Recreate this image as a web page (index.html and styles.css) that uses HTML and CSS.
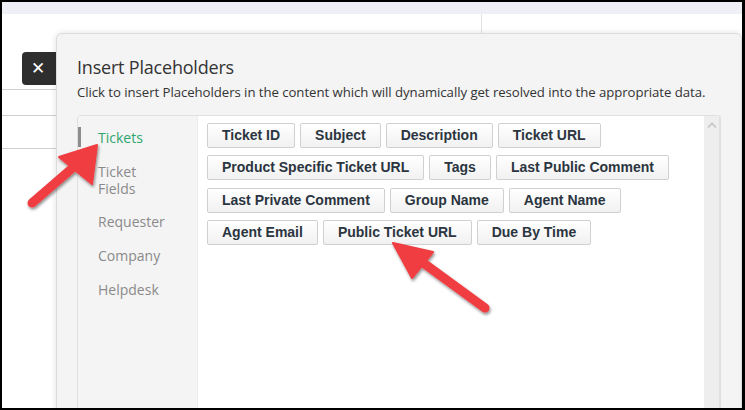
FILE: index.html
```html
<!DOCTYPE html>
<html>
<head>
<meta charset="utf-8">
<link rel="stylesheet" href="styles.css">
</head>
<body>
<div class="frame">
  <div class="app">
    <div class="topbar"></div>
    <div class="page"></div>
    <button class="close" aria-label="Close">&#x2715;</button>
    <div class="dialog">
      <h1 class="title">Insert Placeholders</h1>
      <p class="subtitle">Click to insert Placeholders in the content which will dynamically get resolved into the appropriate data.</p>
      <div class="panel">
        <ul class="side">
          <li class="side-item active">Tickets</li>
          <li class="side-item two-line">Ticket<br>Fields</li>
          <li class="side-item">Requester</li>
          <li class="side-item">Company</li>
          <li class="side-item">Helpdesk</li>
        </ul>
        <div class="content">
          <div class="chips">
            <span class="chip">Ticket ID</span>
            <span class="chip">Subject</span>
            <span class="chip">Description</span>
            <span class="chip">Ticket URL</span>
            <span class="chip">Product Specific Ticket URL</span>
            <span class="chip">Tags</span>
            <span class="chip">Last Public Comment</span>
            <span class="chip">Last Private Comment</span>
            <span class="chip">Group Name</span>
            <span class="chip">Agent Name</span>
            <span class="chip">Agent Email</span>
            <span class="chip">Public Ticket URL</span>
            <span class="chip">Due By Time</span>
          </div>
        </div>
        <div class="scrollbar">
          <svg class="chev" width="10" height="6" viewBox="0 0 10 6"><path d="M1 5.5 L5 1.5 L9 5.5" fill="none" stroke="#c4c4c4" stroke-width="1.6"/></svg>
        </div>
      </div>
    </div>
    <svg class="arrows" width="741" height="406" viewBox="0 0 741 406">
      <defs>
        <filter id="sh" x="-20%" y="-20%" width="140%" height="140%">
          <feDropShadow dx="1" dy="2" stdDeviation="1.6" flood-color="#000" flood-opacity="0.45"/>
        </filter>
      </defs>
      <g filter="url(#sh)" fill="#ef3e42" stroke="#ef3e42">
        <line x1="30" y1="201" x2="74" y2="163" stroke-width="9" stroke-linecap="round"/>
        <polygon points="95,143 90,182 57,155" stroke-width="2" stroke-linejoin="round"/>
        <line x1="483" y1="306" x2="420" y2="260" stroke-width="9" stroke-linecap="round"/>
        <polygon points="391,241 431,250 410,276" stroke-width="2" stroke-linejoin="round"/>
      </g>
    </svg>
  </div>
</div>
</body>
</html>
```

FILE: styles.css
```css
* { box-sizing: border-box; }
html, body { margin: 0; padding: 0; background: #000; }
.frame {
  width: 745px;
  height: 410px;
  background: #000;
  padding: 2px 3px 2px 2px;
}
.app {
  position: relative;
  width: 740px;
  height: 406px;
  background: #fff;
  overflow: hidden;
  font-family: "Open Sans", "Noto Sans", sans-serif;
}
.topbar {
  height: 12px;
  background: #eef0f5;
}
.page {
  height: 394px;
}
.page::after {
  content: "";
  display: block;
  width: 1px;
  height: 19px;
  background: #e3e3e3;
  margin-left: 479px;
}
.app::before {
  content: "";
  position: absolute;
  left: 0;
  top: 87px;
  width: 60px;
  height: 58px;
  border-top: 1px solid #d0d0d0;
  border-bottom: 1px solid #d0d0d0;
}
.app::after {
  content: "";
  position: absolute;
  left: 0;
  top: 113px;
  width: 60px;
  height: 1px;
  background: #d0d0d0;
}
.close {
  position: absolute;
  left: 20px;
  top: 50px;
  width: 40px;
  height: 33px;
  border: 0;
  border-radius: 4px;
  background: #2e2e2e;
  color: #fff;
  font-family: "DejaVu Sans", sans-serif;
  font-size: 17px;
  font-weight: bold;
  padding: 0 8px 0 0;
  line-height: 33px;
  text-align: center;
  z-index: 1;
}
.dialog {
  position: absolute;
  left: 54px;
  top: 31px;
  width: 686px;
  height: 420px;
  background: #f4f4f4;
  border: 1px solid #dcdcdc;
  border-radius: 6px;
  box-shadow: 0 0 6px rgba(0,0,0,0.12);
  padding: 20px 20px 0 20px;
  z-index: 2;
}
.title {
  margin: 0;
  font-size: 18px;
  font-weight: normal;
  color: #333;
  line-height: 26px;
  letter-spacing: -0.2px;
}
.subtitle {
  margin: 3px 0 0 0;
  font-size: 13.2px;
  color: #333;
  line-height: 18px;
  letter-spacing: -0.05px;
}
.panel {
  display: flex;
  margin-top: 14px;
  width: 644px;
  height: 310px;
  border: 1px solid #e0e0e0;
  border-radius: 3px;
  background: #fff;
}
.side {
  list-style: none;
  margin: 0;
  padding: 11px 0 0 0;
  width: 120px;
  background: #f4f4f4;
  border-right: 1px solid #ececec;
}
.side-item {
  font-size: 14px;
  line-height: 17px;
  color: #8a8a8a;
  padding: 0 0 0 17px;
  margin-bottom: 17px;
  border-left: 3px solid transparent;
}
.side-item.active {
  color: #2ea56e;
  border-left-color: #8c8c8c;
  padding-top: 1.5px;
  padding-bottom: 1.5px;
  margin-bottom: 16px;
}
.side-item.two-line {
  margin-bottom: 16px;
}
.content {
  flex: 1;
  padding: 7px 8px 0 9px;
}
.chips {
  display: flex;
  flex-wrap: wrap;
  gap: 7.4px 5px;
}
.chip {
  display: inline-block;
  height: 25px;
  line-height: 23px;
  padding: 0 14px;
  border: 1px solid #d0d0d0;
  border-radius: 2px;
  background: linear-gradient(#ffffff, #f1f1f1);
  font-family: "Liberation Sans", Arial, sans-serif;
  font-weight: bold;
  font-size: 14px;
  color: #2b3540;
  white-space: nowrap;
}
.scrollbar {
  width: 16px;
  background: #eeeeee;
  border-right: 1px solid #e0e0e0;
  display: flex;
  justify-content: center;
  padding-top: 6px;
}
.chev { display: block; }
.arrows {
  position: absolute;
  left: 0;
  top: 0;
  z-index: 5;
  pointer-events: none;
}
```
